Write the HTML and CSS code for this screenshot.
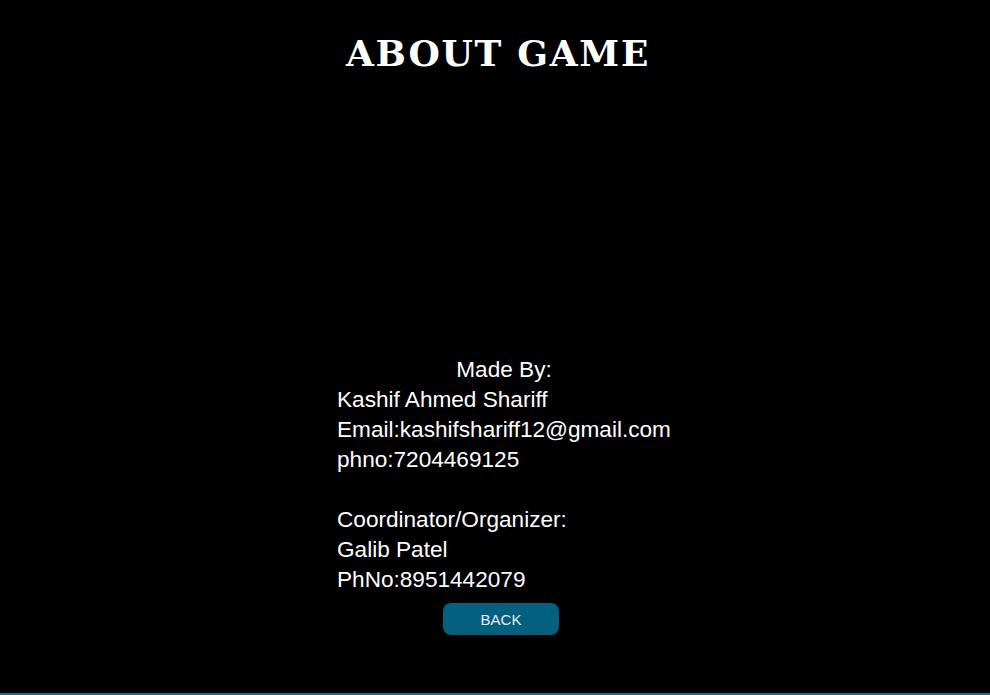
FILE: index.html
```html
<!DOCTYPE html>
<html>
<head>
<meta charset="utf-8">
<link rel="stylesheet" href="styles.css">
</head>
<body>
<div class="page">
  <h1 class="title">ABOUT GAME</h1>
  <div class="spacer"></div>
  <div class="info">
    <p class="made">Made By:</p>
    <p>Kashif Ahmed Shariff</p>
    <p>Email:kashifshariff12@gmail.com</p>
    <p>phno:7204469125</p>
    <p class="blank">&nbsp;</p>
    <p>Coordinator/Organizer:</p>
    <p>Galib Patel</p>
    <p>PhNo:8951442079</p>
  </div>
  <div class="actions">
    <button class="back">BACK</button>
  </div>
</div>
<div class="bottom-line"></div>
</body>
</html>
```
FILE: styles.css
```css
html, body {
  margin: 0;
  padding: 0;
  background: #000;
}
.page {
  height: 693px;
  background: #000;
  display: flex;
  flex-direction: column;
  align-items: center;
  overflow: hidden;
}
.title {
  margin: 32px 0 0 6px;
  font-family: "DejaVu Serif", serif;
  font-weight: bold;
  font-size: 36px;
  line-height: 42px;
  color: #fff;
  letter-spacing: 1.7px;
}
.spacer {
  height: 281px;
}
.info {
  width: 334px;
  margin-left: 18px;
  font-family: "Liberation Sans", Arial, sans-serif;
  font-size: 22.6px;
  line-height: 30px;
  color: #fff;
}
.info p {
  margin: 0;
  white-space: nowrap;
}
.info .made {
  text-align: center;
}
.actions {
  margin-top: 8px;
  margin-left: 12px;
}
.back {
  width: 116px;
  height: 32px;
  border: none;
  border-radius: 8px;
  background: #03607f;
  color: #e8eef2;
  font-family: "Liberation Sans", Arial, sans-serif;
  font-size: 15px;
  padding: 0;
}
.bottom-line {
  height: 2px;
  background: #1f6d89;
}
```
